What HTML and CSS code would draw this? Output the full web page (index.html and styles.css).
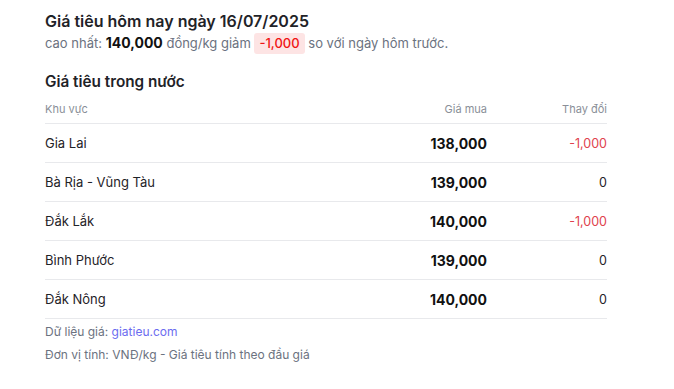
FILE: index.html
```html
<!DOCTYPE html>
<html lang="vi">
<head>
<meta charset="utf-8">
<link rel="stylesheet" href="styles.css">
</head>
<body>
<main class="wrap">
  <h1 class="title">Giá tiêu hôm nay ngày 16/07/2025</h1>
  <p class="summary">cao nhất: <strong class="top">140,000</strong> đồng/kg giảm <span class="badge">-1,000</span> so với ngày hôm trước.</p>

  <h2 class="section">Giá tiêu trong nước</h2>
  <table class="prices">
    <thead>
      <tr><th class="c-region">Khu vực</th><th class="c-price">Giá mua</th><th class="c-change">Thay đổi</th></tr>
    </thead>
    <tbody>
      <tr><td class="c-region">Gia Lai</td><td class="c-price">138,000</td><td class="c-change down">-1,000</td></tr>
      <tr><td class="c-region">Bà Rịa - Vũng Tàu</td><td class="c-price">139,000</td><td class="c-change">0</td></tr>
      <tr><td class="c-region">Đắk Lắk</td><td class="c-price">140,000</td><td class="c-change down">-1,000</td></tr>
      <tr><td class="c-region">Bình Phước</td><td class="c-price">139,000</td><td class="c-change">0</td></tr>
      <tr><td class="c-region">Đắk Nông</td><td class="c-price">140,000</td><td class="c-change">0</td></tr>
    </tbody>
  </table>
  <p class="note">Dữ liệu giá: <a class="link" href="#">giatieu.com</a></p>
  <p class="note">Đơn vị tính: VNĐ/kg - Giá tiêu tính theo đầu giá</p>
</main>
</body>
</html>
```

FILE: styles.css
```css
html, body {
  margin: 0;
  padding: 0;
  background: #ffffff;
}
body {
  font-family: Inter, "Noto Sans", sans-serif;
  color: #111827;
}
.wrap {
  width: 562px;
  padding: 10px 0 0 45px;
}
.title {
  margin: 0;
  font-size: 16px;
  font-weight: 600;
  line-height: 22px;
  color: #1f2328;
}
.summary {
  margin: 0;
  font-size: 13px;
  line-height: 22px;
  color: #6b7280;
}
.top {
  font-size: 14px;
  font-weight: 700;
  color: #111111;
}
.badge {
  display: inline-block;
  padding: 0 5px;
  line-height: 21px;
  font-size: 13px;
  border-radius: 3px;
  background: #fde4e4;
  color: #f01414;
  font-weight: 500;
}
.section {
  margin: 18px 0 0;
  font-size: 15.3px;
  font-weight: 600;
  line-height: 20px;
  color: #1f2328;
}
.prices {
  width: 100%;
  border-collapse: collapse;
  margin-top: 3px;
}
.prices th {
  font-size: 11px;
  font-weight: 400;
  color: #8a8f98;
  height: 28px;
  padding: 0;
  border-bottom: 1px solid #e8e9ec;
}
.prices td {
  height: 38px;
  padding: 0;
  font-size: 13px;
  color: #1f2328;
  border-bottom: 1px solid #e8e9ec;
}
.c-region { text-align: left; }
.c-price { text-align: right; width: 120px; }
.c-change { text-align: right; width: 120px; }
td.c-price {
  font-size: 14px;
  font-weight: 700;
  color: #111111;
}
td.c-change { font-size: 12.5px; }
td.down { color: #e0424d; }
.note {
  margin: 5px 0 0;
  font-size: 12px;
  line-height: 16px;
  color: #6b7280;
}
.note + .note { margin-top: 7px; }
.link {
  color: #6b6cf0;
  text-decoration: none;
}
```
